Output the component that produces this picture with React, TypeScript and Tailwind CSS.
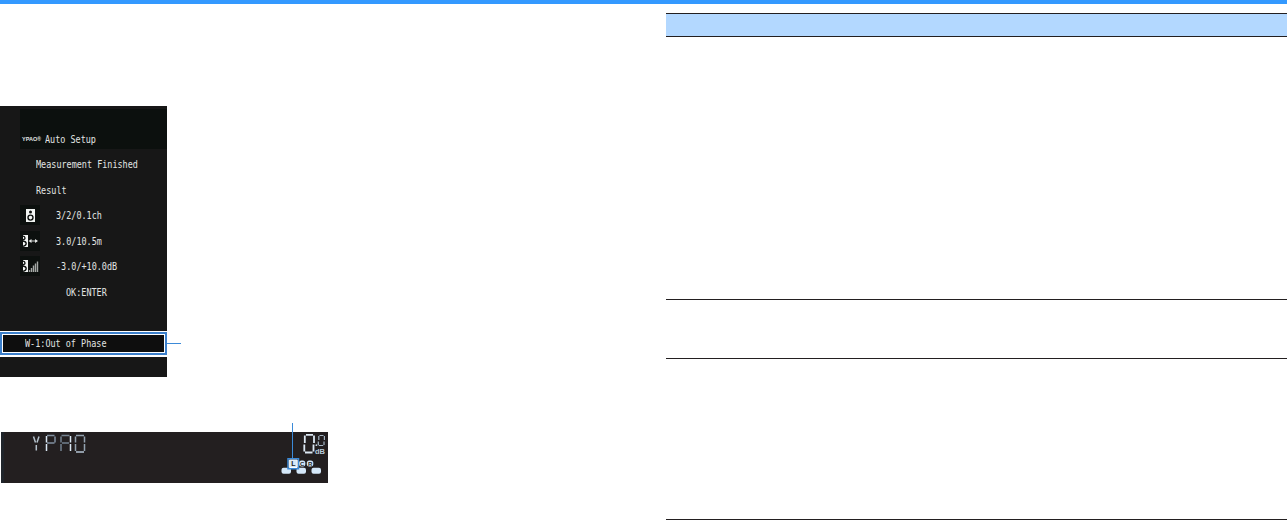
import type { ReactNode } from 'react';

const osd =
  "block origin-left scale-x-[0.806] whitespace-pre font-['DejaVu_Sans_Mono',monospace] text-[10.5px] leading-none text-[#e2e5e3]";

function Line({ children, className }: { children: ReactNode; className: string }) {
  return (
    <div className={`flex h-[25.5px] items-center ${className}`}>
      <span className={osd}>{children}</span>
    </div>
  );
}

function HalfSpeaker() {
  return (
    <>
      <path d="M3 4h5v12H3z" fill="#f1f4f2" />
      <path d="M3 5.2q2 .2 2 1.8t-2 1.6M3 10q3.2.4 3.2 2.6T3 15.4" fill="none" stroke="#0c100e" strokeWidth="1.3" />
    </>
  );
}

function Measure({ icon, children }: { icon: ReactNode; children: string }) {
  return (
    <div className="flex h-[25.5px] items-center pl-5">
      <svg viewBox="0 0 20 20" className="mr-[15.5px] h-5 w-5 shrink-0 bg-[#0c100e]">
        {icon}
      </svg>
      <span className={osd}>{children}</span>
    </div>
  );
}

function Screen() {
  return (
    <div className="relative h-[271px] w-[167px] bg-[#171717]">
      <div className="pl-5 pt-[3px]">
        <div className="flex h-10 items-end bg-[#0c100e] pb-[3px] pl-[2px]">
          <div className="flex h-[13px] items-center">
            <span className="block w-[23px] whitespace-nowrap font-['Liberation_Sans',sans-serif] text-[5.5px] font-bold leading-none text-[#e2e5e3]">
              YPAO<span className="text-[5px]">®</span>
            </span>
            <span className={osd}>Auto Setup</span>
          </div>
        </div>
      </div>
      <div className="pt-[2.6px]">
        <Line className="pl-[35.5px]">Measurement Finished</Line>
        <Line className="pl-[35.5px]">Result</Line>
        <Measure
          icon={
            <>
              <path d="M6 4h9v13H6z" fill="#f1f4f2" />
              <circle cx="10.5" cy="6.9" r="1.5" fill="#0c100e" />
              <circle cx="10.5" cy="12.6" r="2.5" fill="none" stroke="#0c100e" strokeWidth="1.4" />
            </>
          }
        >
          3/2/0.1ch
        </Measure>
        <Measure
          icon={
            <>
              <HalfSpeaker />
              <path d="M10 10h7" stroke="#c9cdca" strokeWidth="1" />
              <path d="M8.5 10l3-2v4zM18 10l-3-2v4z" fill="#e3e6e4" />
            </>
          }
        >
          3.0/10.5m
        </Measure>
        <Measure
          icon={
            <>
              <HalfSpeaker />
              <path d="M9.5 14v2M11.5 12v4M13.5 9.5v6.5M15.5 7.5v8.5M17.5 5.5v10.5" stroke="#a5a9a6" strokeWidth="1.4" />
            </>
          }
        >
          -3.0/+10.0dB
        </Measure>
        <Line className="pl-[66px]">OK:ENTER</Line>
      </div>
      <div className="absolute left-0 top-[225px] flex h-[26px] w-[181px] items-start border-t border-white">
        <div className="h-[25px] w-[167px] border-b-2 border-white">
          <div className="h-[23px] border-2 border-[#3b7fcb]">
            <div className="flex h-[19px] items-center border border-white bg-[#0e0e0e] pl-[22px]">
              <span className={osd}>W-1:Out of Phase</span>
            </div>
          </div>
        </div>
        <div className="mt-[11px] h-px w-[14px] bg-[#3b8ad8]" />
      </div>
    </div>
  );
}

function Display() {
  return (
    <svg viewBox="0 0 328 61" className="block h-[61px] w-[328px]">
      <path d="M1 10h327v51H1z" fill="#231f20" />
      <path d="M1 10h3v51H1z" fill="#20252b" />
      <g fill="none" strokeWidth="1.5">
        <path d="M33.5 14.5l2 6M39 14.5l-2 6M36.3 23v5.5" stroke="#b3c0cb" />
        <path d="M47 13.5h7.5M55 14.5v6M47 21h7.5" stroke="#8190a0" />
        <path d="M46.5 14v6.5M46.5 22v7" stroke="#dae8f4" />
        <path d="M61.5 13.5h8M61 14.5v6M61 22v7M62 21h7" stroke="#73818e" />
        <path d="M70.5 14v6.5M70.5 22v7" stroke="#dae8f4" />
        <path d="M76 13.5h8M75.5 14.5v6M75.5 22v7M84.5 14.5v6M84.5 22v7" stroke="#93a2b0" />
        <path d="M76 30h8" stroke="#b6c6d4" />
        <path d="M306 12.8h7M304.8 13.5v7.5M304.3 22.5v7M314 13.5v7.5M313.5 22.5v7M305 30.5h7.5" stroke="#dce8f3" strokeWidth="1.8" />
        <path d="M319.5 13.5h4M318.8 14v4M318.3 19.5v3.5M324.4 14v4M324 19.5v3.5M318.7 23.5h4.5" stroke="#a5b6c5" strokeWidth="1.2" />
      </g>
      <circle cx="316.4" cy="23.2" r=".9" fill="#c3d2df" />
      <text x="315" y="31.5" textLength="10" lengthAdjust="spacingAndGlyphs" fontSize="8" fontWeight="700" fill="#b9cbdc" fontFamily="Liberation Sans, sans-serif">
        dB
      </text>
      <g fill="#d4e7f8">
        <rect x="281.5" y="45.7" width="9.5" height="6" rx="2" />
        <rect x="296.5" y="45.7" width="9.5" height="6" rx="2" />
        <rect x="311.5" y="45.7" width="9.5" height="6" rx="2" />
        <rect x="299" y="38.5" width="6.3" height="6" rx="2.5" />
        <rect x="306.8" y="38.5" width="6.5" height="6" rx="2.5" />
      </g>
      <path d="M288 36.8h10.5v10H288z" fill="#231f20" stroke="#3b8ad8" strokeWidth="1.5" />
      <path d="M289.3 38.1h7.9v7.4h-7.9z" fill="#d4e7f8" stroke="#fff" strokeWidth="1" />
      <g fontSize="6" fontWeight="700" fill="#231f20" fontFamily="Liberation Sans, sans-serif">
        <text x="291.2" y="44" fontSize="7">L</text>
        <text x="300" y="43.7">C</text>
        <text x="307.9" y="43.7">R</text>
      </g>
      <path d="M292.5 1v35.5" stroke="#3b8ad8" />
    </svg>
  );
}

export default function App() {
  return (
    <div className="h-[520px] w-[1287px] overflow-hidden bg-white">
      <div className="h-1 bg-[#3399ff]" />
      <div className="flex h-[516px]">
        <div className="w-[666px] pt-[102px]">
          <Screen />
          <div className="pt-[45px]">
            <Display />
          </div>
        </div>
        <div className="flex-1 pt-[9px]">
          <div className="h-6 border-y border-[#231f20] bg-[#b3d8ff]" />
          <div className="h-[263px] border-b border-[#231f20]" />
          <div className="h-[59px] border-b border-[#231f20]" />
          <div className="h-[161px] border-b border-[#231f20]" />
        </div>
      </div>
    </div>
  );
}
